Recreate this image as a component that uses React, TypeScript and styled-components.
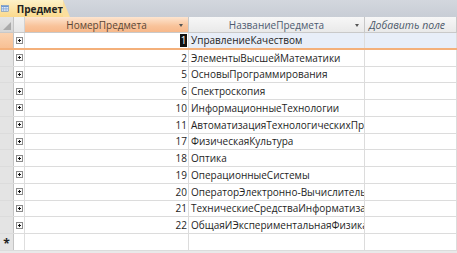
import React from "react";
import styled, { createGlobalStyle } from "styled-components";

const Global = createGlobalStyle`
  html, body { margin: 0; padding: 0; }
  body { width: 457px; height: 253px; overflow: hidden; background: #e9e9e9; font-family: "Open Sans", "Liberation Sans", sans-serif; }
`;

const Page = styled.div`
  width: 457px;
  height: 253px;
  display: flex;
  flex-direction: column;
  overflow: hidden;
`;

const TabStrip = styled.div`
  height: 17px;
  flex: none;
  background: linear-gradient(#d3d7de, #c8cdd5);
  display: flex;
  align-items: flex-end;
`;

const Tab = styled.div`
  height: 17px;
  width: 63px;
  display: flex;
  align-items: center;
  gap: 8px;
  padding-left: 1px;
  box-sizing: border-box;
  background: linear-gradient(#fdf1c8, #fbd98c);
  position: relative;
  font-family: "Open Sans", sans-serif;
  font-weight: 700;
  font-size: 10px;
  color: #222;
  &::after {
    content: "";
    position: absolute;
    right: -7px;
    top: 0;
    width: 0;
    height: 0;
    border-left: 7px solid #fbdf9e;
    border-top: 17px solid transparent;
  }
`;

const Header = styled.div`
  height: 16px;
  flex: none;
  display: flex;
  border-bottom: 1px solid #c9c9c9;
  box-sizing: border-box;
`;

const Corner = styled.div`
  width: 14px;
  flex: none;
  background: linear-gradient(#e4e4e4, #d6d6d6);
  border-right: 1px solid #c4c4c4;
  box-sizing: border-box;
  display: flex;
  align-items: flex-end;
  justify-content: flex-end;
  padding: 0 2px 2px 0;
`;

const ExpHead = styled.div`
  width: 11px;
  flex: none;
  background: linear-gradient(#f2f2f2, #e6e6e6);
  border-right: 1px solid #d2d2d2;
  box-sizing: border-box;
`;

const HeadCell = styled.div<{ $w: number; $active?: boolean; $italic?: boolean }>`
  width: ${(p) => p.$w}px;
  flex: ${(p) => (p.$w ? "none" : "1")};
  box-sizing: border-box;
  position: relative;
  display: flex;
  align-items: center;
  justify-content: ${(p) => (p.$italic ? "flex-start" : "center")};
  padding-left: ${(p) => (p.$italic ? "4px" : "0")};
  font-size: ${(p) => (p.$italic ? "10.5px" : "10px")};
  font-style: ${(p) => (p.$italic ? "italic" : "normal")};
  color: ${(p) => (p.$active ? "#5a4636" : p.$italic ? "#4d5a6a" : "#4d5b70")};
  background: ${(p) =>
    p.$active
      ? "linear-gradient(#fde5d0, #f9c39a 60%, #f7b88a)"
      : "linear-gradient(#f7f7f7, #e9e9e9)"};
  border-right: 1px solid #c8c8c8;
`;

const Arrow = styled.span`
  position: absolute;
  right: 5px;
  top: 7px;
  width: 0;
  height: 0;
  border-left: 2.5px solid transparent;
  border-right: 2.5px solid transparent;
  border-top: 3px solid #555;
`;

const Body = styled.div`
  display: flex;
  flex-direction: column;
  background: #fff;
  flex: none;
`;

const Row = styled.div<{ $sel?: boolean }>`
  height: 16.75px;
  display: flex;
  box-sizing: border-box;
  border-bottom: ${(p) => (p.$sel ? "2px solid #f4b07a" : "1px solid #dcdcdc")};
  font-size: 10px;
  color: #1e1e1e;
`;

const Selector = styled.div<{ $sel?: boolean }>`
  width: 14px;
  flex: none;
  box-sizing: border-box;
  border-right: 1px solid #c4c4c4;
  background: ${(p) => (p.$sel ? "linear-gradient(#fbd3b0, #f8c094)" : "#e4e4e4")};
  display: flex;
  align-items: center;
  justify-content: center;
  padding-top: 4px;
  font-size: 12px;
  font-weight: 700;
  color: #222;
`;

const Exp = styled.div`
  width: 11px;
  flex: none;
  box-sizing: border-box;
  border-right: 1px solid #dedede;
  display: flex;
  align-items: center;
  justify-content: center;
`;

const Plus = styled.span`
  width: 7px;
  height: 7px;
  box-sizing: border-box;
  border: 1px solid #8a8a8a;
  background: #fafafa;
  position: relative;
  &::before {
    content: "";
    position: absolute;
    left: 1px;
    top: 2px;
    width: 3px;
    height: 1px;
    background: #111;
  }
  &::after {
    content: "";
    position: absolute;
    left: 2px;
    top: 1px;
    width: 1px;
    height: 3px;
    background: #111;
  }
`;

const Cell = styled.div<{ $w: number; $right?: boolean; $tint?: boolean }>`
  width: ${(p) => p.$w}px;
  flex: ${(p) => (p.$w ? "none" : "1")};
  box-sizing: border-box;
  border-right: 1px solid #dcdcdc;
  display: flex;
  align-items: center;
  justify-content: ${(p) => (p.$right ? "flex-end" : "flex-start")};
  padding: ${(p) => (p.$right ? "0 1px 0 0" : "0 0 0 2px")};
  white-space: nowrap;
  overflow: hidden;
  background: ${(p) => (p.$tint ? "#e8eef8" : "transparent")};
`;

const Cursor = styled.span`
  background: #111;
  color: #fff;
  padding: 0 0.5px;
  line-height: 13px;
`;

const Rest = styled.div`
  flex: 1;
  background: #e9e9e9;
`;

const rows: [number, string][] = [
  [1, "УправлениеКачеством"],
  [2, "ЭлементыВысшейМатематики"],
  [5, "ОсновыПрограммирования"],
  [6, "Спектроскопия"],
  [10, "ИнформационныеТехнологии"],
  [11, "АвтоматизацияТехнологическихПроцессов"],
  [17, "ФизическаяКультура"],
  [18, "Оптика"],
  [19, "ОперационныеСистемы"],
  [20, "ОператорЭлектронно-ВычислительныхМашин"],
  [21, "ТехническиеСредстваИнформатизации"],
  [22, "ОбщаяИЭкспериментальнаяФизика"],
];

const TableIcon = () => (
  <svg width="14" height="11" viewBox="0 0 14 11">
    <rect x="0.5" y="0.5" width="13" height="10" fill="#eaf2fc" stroke="#5b86c0" />
    <rect x="0.5" y="0.5" width="13" height="2.5" fill="#6e98d0" />
    <path d="M0.5 5.5H13.5M0.5 8H13.5M4.5 0.5V10.5M9 0.5V10.5" stroke="#7aa0d2" strokeWidth="1" />
  </svg>
);

const CornerMark = () => (
  <svg width="8" height="8" viewBox="0 0 8 8">
    <path d="M8 0L8 8L0 8Z" fill="#a9a9a9" />
  </svg>
);

export default function App() {
  return (
    <Page>
      <Global />
      <TabStrip>
        <Tab>
          <TableIcon />
          Предмет
        </Tab>
      </TabStrip>
      <Header>
        <Corner>
          <CornerMark />
        </Corner>
        <ExpHead />
        <HeadCell $w={164} $active>
          НомерПредмета
          <Arrow />
        </HeadCell>
        <HeadCell $w={176}>
          НазваниеПредмета
          <Arrow />
        </HeadCell>
        <HeadCell $w={0} $italic>
          Добавить поле
        </HeadCell>
      </Header>
      <Body>
        {rows.map(([n, name], i) => (
          <Row key={n} $sel={i === 0}>
            <Selector $sel={i === 0} />
            <Exp>
              <Plus />
            </Exp>
            <Cell $w={164} $right>
              {i === 0 ? <Cursor>{n}</Cursor> : n}
            </Cell>
            <Cell $w={176} $tint={i === 0}>
              {name}
            </Cell>
            <Cell $w={0} $tint={i === 0} />
          </Row>
        ))}
        <Row>
          <Selector>*</Selector>
          <Exp />
          <Cell $w={164} />
          <Cell $w={176} />
          <Cell $w={0} />
        </Row>
      </Body>
      <Rest />
    </Page>
  );
}
